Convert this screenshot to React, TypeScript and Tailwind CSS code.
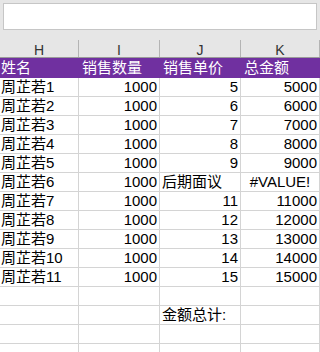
const rows = [
  { name: "周芷若1", qty: "1000", price: "5", total: "5000" },
  { name: "周芷若2", qty: "1000", price: "6", total: "6000" },
  { name: "周芷若3", qty: "1000", price: "7", total: "7000" },
  { name: "周芷若4", qty: "1000", price: "8", total: "8000" },
  { name: "周芷若5", qty: "1000", price: "9", total: "9000" },
  { name: "周芷若6", qty: "1000", price: "后期面议", total: "#VALUE!" },
  { name: "周芷若7", qty: "1000", price: "11", total: "11000" },
  { name: "周芷若8", qty: "1000", price: "12", total: "12000" },
  { name: "周芷若9", qty: "1000", price: "13", total: "13000" },
  { name: "周芷若10", qty: "1000", price: "14", total: "14000" },
  { name: "周芷若11", qty: "1000", price: "15", total: "15000" },
];

const grid = "grid grid-cols-[79px_81px_81px_1fr]";
const cell = "h-[19px] border-r border-b border-[#d4d4d4] leading-[18px] whitespace-nowrap overflow-visible";

function isNum(v: string) {
  return /^[0-9]+$/.test(v);
}

export default function App() {
  return (
    <div
      className="w-[320px] h-[352px] overflow-hidden bg-white text-[15px] text-black"
      style={{ fontFamily: '"Liberation Sans", "Noto Sans CJK SC", sans-serif' }}
    >
      {/* formula bar + column letters */}
      <div className="bg-[#e6e6e6] pt-[3px] h-[58px] border-b border-[#9a9a9a]">
        <div className="mx-[3px] h-[27px] bg-white border border-[#c6c6c6]" />
        <div className={`${grid} mt-[10px] h-[17px] text-[14px] text-[#333]`}>
          {["H", "I", "J", "K"].map((c) => (
            <div
              key={c}
              className="border-r border-[#b4b4b4] flex items-center justify-center leading-none pt-[3px]"
            >
              {c}
            </div>
          ))}
        </div>
      </div>

      {/* purple title row */}
      <div className={`${grid} h-[20px] bg-[#7030a0] text-white leading-[19px]`}>
        <div className="pl-px border-r border-[#7030a0]">姓名</div>
        <div className="pl-[3px] border-r border-[#7030a0]">销售数量</div>
        <div className="pl-[3px] border-r border-[#7030a0]">销售单价</div>
        <div className="pl-[3px]">总金额</div>
      </div>

      {rows.map((r) => (
        <div key={r.name} className={grid}>
          <div className={`${cell} pl-px`}>{r.name}</div>
          <div className={`${cell} text-right pr-[2px]`}>{r.qty}</div>
          <div className={`${cell} ${isNum(r.price) ? "text-right pr-[2px]" : "pl-[2px]"}`}>{r.price}</div>
          <div className={`${cell} ${isNum(r.total) ? "text-right pr-[2px]" : "text-center"}`}>{r.total}</div>
        </div>
      ))}

      {[0, 1, 2, 3].map((i) => (
        <div key={i} className={grid}>
          <div className={cell} />
          <div className={cell} />
          <div className={`${cell} pl-[2px]`}>{i === 1 ? "金额总计:" : ""}</div>
          <div className={cell} />
        </div>
      ))}
    </div>
  );
}
